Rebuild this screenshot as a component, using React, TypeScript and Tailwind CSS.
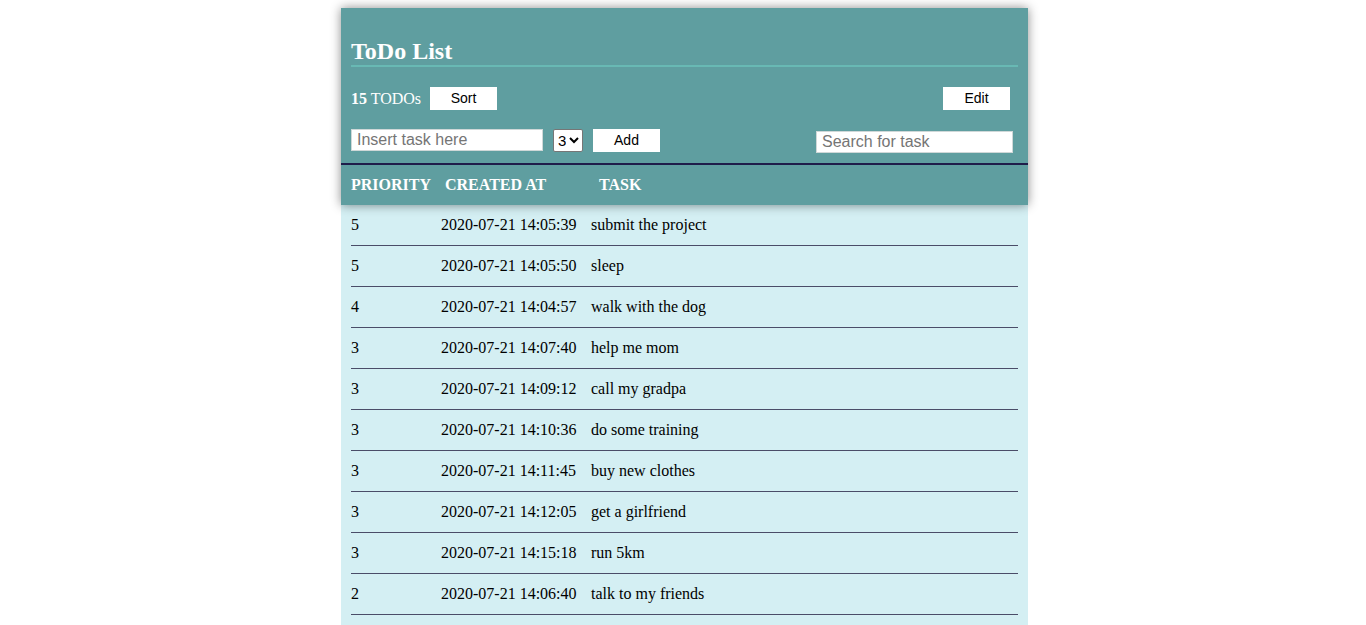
import { useState } from 'react'

type Todo = { priority: number; created: string; text: string }

const todos: Todo[] = [
  { priority: 5, created: '2020-07-21 14:05:39', text: 'submit the project' },
  { priority: 5, created: '2020-07-21 14:05:50', text: 'sleep' },
  { priority: 4, created: '2020-07-21 14:04:57', text: 'walk with the dog' },
  { priority: 3, created: '2020-07-21 14:07:40', text: 'help me mom' },
  { priority: 3, created: '2020-07-21 14:09:12', text: 'call my gradpa' },
  { priority: 3, created: '2020-07-21 14:10:36', text: 'do some training' },
  { priority: 3, created: '2020-07-21 14:11:45', text: 'buy new clothes' },
  { priority: 3, created: '2020-07-21 14:12:05', text: 'get a girlfriend' },
  { priority: 3, created: '2020-07-21 14:15:18', text: 'run 5km' },
  { priority: 2, created: '2020-07-21 14:06:40', text: 'talk to my friends' },
  { priority: 2, created: '2020-07-21 14:08:02', text: 'clean the room' },
  { priority: 2, created: '2020-07-21 14:13:27', text: 'read a book' },
  { priority: 1, created: '2020-07-21 14:06:11', text: 'watch a movie' },
  { priority: 1, created: '2020-07-21 14:14:09', text: 'cook dinner' },
  { priority: 1, created: '2020-07-21 14:16:33', text: 'play guitar' },
]

const serif = { fontFamily: '"Liberation Serif", "Times New Roman", serif' }

export default function App() {
  const [task, setTask] = useState('')
  const [prio, setPrio] = useState('3')
  const [search, setSearch] = useState('')

  return (
    <div className="min-h-screen bg-white pt-2 pb-2" style={serif}>
      <div className="ml-[341px] w-[687px]">
        <div className="bg-[#5f9ea0] text-white shadow-[0_0_10px_rgba(0,0,0,0.45)] relative">
          <div className="px-[10px] pt-[30px]">
            <h2 className="text-[24px] leading-[27px] font-bold border-b-2 border-[#68b9b4]">ToDo List</h2>

            <div className="flex items-center mt-5 h-[23px]">
              <span className="text-[16px]"><b>15</b> TODOs</span>
              <button className="ml-[9px] w-[67px] h-[23px] bg-white text-black text-[14px] font-['Liberation_Sans',Arial,sans-serif]">Sort</button>
              <button className="ml-auto mr-2 w-[67px] h-[23px] bg-white text-black text-[14px] font-['Liberation_Sans',Arial,sans-serif]">Edit</button>
            </div>

            <div className="flex items-start mt-[19px] pb-[10px] font-['Liberation_Sans',Arial,sans-serif]">
              <input
                value={task}
                onChange={e => setTask(e.target.value)}
                placeholder="Insert task here"
                className="w-[192px] h-[22px] bg-white text-black text-[16px] px-[5px] border border-[#cfd8d8] placeholder:text-[#757575] outline-none"
              />
              <select
                value={prio}
                onChange={e => setPrio(e.target.value)}
                className="ml-[10px] w-[30px] h-[23px] bg-white text-black text-[15px] border border-[#767676] rounded-[2px]"
              >
                {[1, 2, 3, 4, 5].map(n => <option key={n} value={n}>{n}</option>)}
              </select>
              <button className="ml-[10px] w-[67px] h-[23px] bg-white text-black text-[14px]">Add</button>
              <input
                value={search}
                onChange={e => setSearch(e.target.value)}
                placeholder="Search for task"
                className="ml-auto mr-[5px] mt-[2px] w-[197px] h-[22px] bg-white text-black text-[16px] px-[5px] border border-[#cfd8d8] placeholder:text-[#757575] outline-none"
              />
            </div>
          </div>

          <div className="border-t-2 border-[#1f1d4a] h-[42px] px-[10px] flex items-center font-bold text-[16px]">
            <span className="w-[94px]">PRIORITY</span>
            <span className="w-[154px]">CREATED AT</span>
            <span>TASK</span>
          </div>
        </div>

        <div className="bg-[#d4eff3] px-[10px] text-black text-[16px]">
          {todos
            .filter(t => t.text.toLowerCase().includes(search.toLowerCase()))
            .map(t => (
              <div key={t.created} className="flex items-center h-[41px] border-b border-[#4a4d68]">
                <span className="w-[90px]">{t.priority}</span>
                <span className="w-[150px]">{t.created}</span>
                <span>{t.text}</span>
              </div>
            ))}
        </div>
      </div>
    </div>
  )
}
